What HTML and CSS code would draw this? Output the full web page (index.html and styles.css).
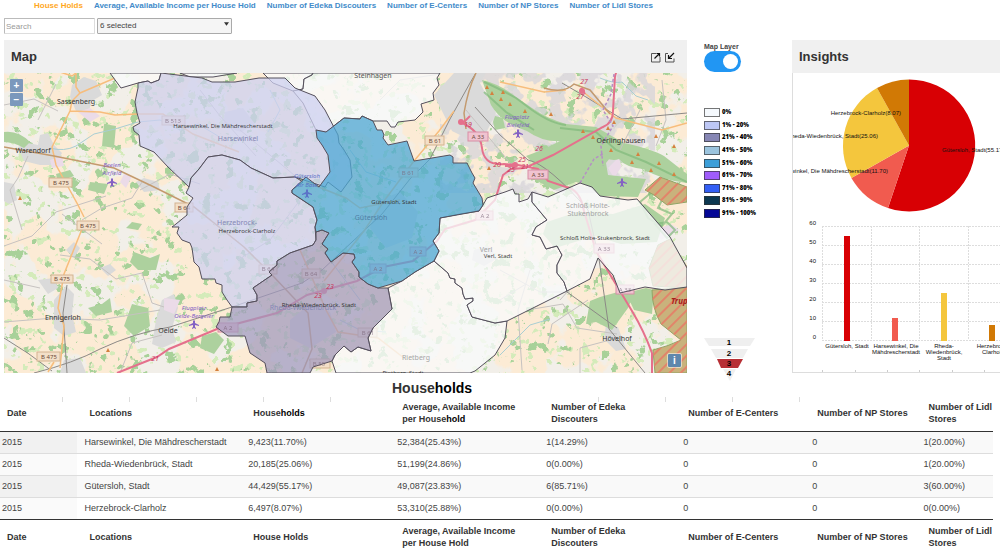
FILE: index.html
```html
<!DOCTYPE html>
<html lang="en">
<head>
<meta charset="utf-8">
<title>Households dashboard</title>
<link rel="stylesheet" href="styles.css">
</head>
<body>
<nav class="tabs">
  <a class="tab tab-active" href="#households">House Holds</a>
  <a class="tab" href="#income">Average, Available Income per House Hold</a>
  <a class="tab" href="#edeka">Number of Edeka Discouters</a>
  <a class="tab" href="#ecenters">Number of E-Centers</a>
  <a class="tab" href="#np">Number of NP Stores</a>
  <a class="tab" href="#lidl">Number of Lidl Stores</a>
</nav>

<form class="filters">
  <input class="search" type="text" placeholder="Search" aria-label="Search">
  <div class="picker">
    <select class="select" aria-label="Locations"><option>6 selected</option></select>
    <svg class="caret" viewBox="0 0 6 4" aria-hidden="true"><path d="M0 0h6L3 4z"/></svg>
  </div>
</form>

<main class="dashboard">
  <section class="panel">
    <header class="panel-head">
      <h2 class="panel-title">Map</h2>
      <div class="panel-tools">
        <button class="tool" type="button" aria-label="Expand">
          <svg viewBox="0 0 11 11"><path class="tool-box" d="M6 1.500H1.500V10H10V5"/><path class="tool-arrow" d="M4.500 6.500L9 2M6.500 1.500h3V4.500"/></svg>
        </button>
        <button class="tool" type="button" aria-label="Collapse">
          <svg viewBox="0 0 11 11"><path class="tool-box" d="M4 1.500H1.500V10H10V6.500"/><path class="tool-arrow" d="M10 1L5 6M4.500 3v3.500H8"/></svg>
        </button>
      </div>
    </header>
    <div class="map">
      <svg class="map-canvas" viewBox="4 73 683 300" role="img" aria-label="Map of the Gütersloh district">
        <defs>
          <filter id="fields" x="0" y="0" width="100%" height="100%" color-interpolation-filters="sRGB">
            <feTurbulence type="fractalNoise" baseFrequency="0.022" numOctaves="4" seed="4"/>
            <feColorMatrix values="0 0 0 0 .988  0 0 0 0 .922  0 0 0 0 .835  22 0 0 0 -9.500"/>
          </filter>
          <filter id="meadow" x="0" y="0" width="100%" height="100%" color-interpolation-filters="sRGB">
            <feTurbulence type="fractalNoise" baseFrequency="0.110" numOctaves="3" seed="11"/>
            <feColorMatrix values="0 0 0 0 .83  0 0 0 0 .92  0 0 0 0 .73  20 0 0 0 -12.800"/>
          </filter>
          <filter id="woods" x="0" y="0" width="100%" height="100%" color-interpolation-filters="sRGB">
            <feTurbulence type="fractalNoise" baseFrequency="0.085" numOctaves="4" seed="29"/>
            <feColorMatrix values="0 0 0 0 .66  0 0 0 0 .82  0 0 0 0 .60  22 0 0 0 -14"/>
          </filter>
          <filter id="suburb" x="0" y="0" width="100%" height="100%" color-interpolation-filters="sRGB">
            <feTurbulence type="fractalNoise" baseFrequency="0.060" numOctaves="3" seed="7"/>
            <feColorMatrix values="0 0 0 0 .85  0 0 0 0 .84  0 0 0 0 .86  16 0 0 0 -8"/>
          </filter>
          <pattern id="hatch" width="8" height="8" patternUnits="userSpaceOnUse" patternTransform="rotate(45)">
            <path d="M1 0v8" stroke="#e2846a" stroke-width="2"/>
          </pattern>
          <g id="plane"><path d="M0-4l1 1v2l4 2v1L1 1v2l1 1v1L0 4l-2 1V4l1-1V1l-4 1V1l4-2v-2z"/></g>
        </defs>

        <rect x="4" y="73" width="683" height="300" fill="#f2efe9"/>
        <rect x="4" y="73" width="683" height="300" filter="url(#fields)"/>
        <rect x="4" y="73" width="683" height="300" filter="url(#meadow)"/>
        <rect x="4" y="73" width="683" height="300" filter="url(#woods)"/>
        <rect x="440" y="73" width="215" height="120" filter="url(#suburb)" opacity=".8"/>

        <g class="town">
          <path d="M72 85l12-8 12 4 6 14-10 6-4 12-12-2-6-14zM18 147l10-4 10 2 2-10 8-2 6 12 8 8-6 12-16 0-16-4zM4 182l10 2 3 16-8 4-5-3zM54 300l12-14 8 8-2 20 4 18-12 4-10-8zM162 300l12-6 4 14-6 20 4 14-14 6-10-4 4-24zM64 360l16-2 6 15H60zM66 250l8-8 6 6-6 10zM136 182l8-4 14 4 2 8-16 2zM100 268l10-4 6 6-8 6zM38 280l16-2 4 10-10 6z"/>
          <path d="M380 200l20-8 18 20-6 26-26 10-16-20zM290 320l20-16 20 8 6 20-26 16-20-10zM225 112l18-4 12 16-14 8-18-6zM474 250l14-4 10 12-14 8-12-6zM606 325l12 2 8 22-10 2-12-12z"/>
          <path d="M434 95l20-22h32l-6 10 16 30-16 32-28-14z"/>
        </g>
        <g class="industry">
          <path d="M78 112l12-4 10 8-10 6zM50 160l12-4 2 10-12 2zM124 174l8 2-6 12-6-6zM164 298l16 2-6 14-10-4zM600 310l12-4 4 12-10 10zM608 168l10-10 4 8-8 12zM655 230l16-6 8 6-18 10z"/>
        </g>

        <g class="wood">
          <path d="M4 132q14-2 26 10l-6 6q-10-6-20-6zM104 124l12 2-2 22-12-2zM132 222l10 2-4 6-12-2zM90 182l18 2-4 10-16-4zM88 308l14-4 8-6 2 14-16 4zM134 252l16 6 10-4-4 16-18 0-8-8zM132 304l16 4 2 18-16 10-10-10zM202 336l14-4 8 8-10 14-14-6zM56 174l14-4 4 6-16 6z"/>
          <path d="M482 80q18 4 34 17l16 11q14 10 34 16l30 3q14 8 28 16 28 6 40 13l23 18v9q-22-2-44-14-18-2-24-10-10 4-22-8-14-10-32-10-22 2-38-10-26-8-36-26z"/>
          <path d="M542 150l30-15 30 14 12 4-8 10 2 12 38 4-8 18-38-1-12-10-12-4-22 8-26-14 6-12-8-8zM495 116l8 2 2 10-10 2-2-8zM590 301l10-4 18-5 16 2-6 14-16 22-16-8-10 2zM626 293l20-5 8 2-2 24-18-4zM547 222l30-10 36 2 32-10 20 14-8 24-36 2-26-8-40 12-12-14z"/>
        </g>
        <g class="wood-edge">
          <path d="M484 82q14 6 32 16l16 12q20 14 34 15M560 128l36 4 20 18 30 12 41 20M484 92l22 20 28 18M640 202l12-10 10 8-4 8 14 6-10 12-14-8zM655 224l12-2 8 8-8 8z"/>
        </g>
        <g class="reserve">
          <path d="M645 190l15-13 27 10v15l-20 3-13-10z"/>
          <path d="M652 290l35-3v86h-32l-2-23q16-4 28-10l-20-16q-9-16-9-34zM658 245l12-6 17 28v21l-34-2-4-18z"/>
          <path class="hatched" d="M645 190l15-13 27 10v15l-20 3-13-10z"/>
          <path class="hatched" d="M652 290l35-3v86h-32l-2-23q16-4 28-10l-20-16q-9-16-9-34zM658 245l12-6 17 28v21l-34-2-4-18z"/>
        </g>

        <g class="stream">
          <path d="M50 148q14 4 26-2l18-12q20-4 44-12l22-2 20 10 18-6 20 12M600 78q14 6 22 4l14 14 12 4M350 150l16 22 30 10M340 320l20 10 26 2M500 355l30-30 20-6M270 90l10 20-12 22M330 260l30 40"/>
        </g>
        <g class="lane">
          <path d="M4 105l30-6 24 12M38 120l18-36M4 246l28-10 24-24 50-16M28 156l-10 22-8 12 12 40M60 255l30 4 26 20 26-6 10 30 12 4M4 280l36 8M4 322l50-4 46 2 60-10M62 214l40 30M82 220l20-12 30-10 10-16M140 190l30-16 30 10M120 373l12-30 30-8M200 90l20 26 36 40M240 130l60 50M380 100l20-20 40-6M300 200l-30 40-32 20M500 270l40 22 30 0M530 270l-12 40 4 60M527 310l36-6 14 24 40 6M560 300l18-20M580 348v25M580 348l30-8M588 300l-36 24-4 20M640 110l-20 40M662 80l4 40-10 26M500 300l26-16M466 110l50 60"/>
        </g>
        <g class="rail">
          <path d="M4 338q24 14 48 33M34 373q40-10 66-24 34-16 70-22l62-20 70-24 20-13 60-56 28-35 20-20 20-40 20-36q8-14 18-30M67 373l-4-60 4-28M475 107l25 28 28 25q20 4 60 50l11 49 10 70 36 44M567 292l50 36M562 83l24 14 36 22 65-6"/>
        </g>
        <g class="road">
          <path d="M60 72l12 4 4-3 0 14 4 6-8 8 -2 10 -18 36 4 18 22 40 6 12M70 111l30 1 15 3 22-1 26 0 30 20 46 18M80 93l35-15M84 224l-20 50-6 34 6 18-4 42M48 372l6-10M306 182l40 16 14 10 40-8M414 161l25-30 15-20M414 161l-30 40-20 30-40 50M300 250l26 60 12 22 40 6 26 20M500 82l44 10 22-2M582 91l34 27 46 12 25-7"/>
        </g>
        <g class="trunk"><path d="M4 147l50 9 60 12 40 19 40 20 50 40 30 30 34 36 4 36-10 24M476 73q-8 16-12 40l2 16M544 88q20 6 30-4l16 6 20 24"/></g>
        <g class="motorway">
          <path d="M117 373l40-16 12-8 48-20 60-16 30-18 50-14 26-14 30-6 24-20 8-12 30-9 20-20 8-25 8-6 14-1 28-13 50-28q10-4 10-16l2-35 6-18M460 122q20 8 22 26t22 16l14 1 20 4 10 12 18 6q14 2 18 24l12 40 36 60q12 20 20 42v22M517 166l-12 0M581 88l4 6M462 124l8-8"/>
          <circle cx="461" cy="122" r="3"/><circle cx="515" cy="165" r="3"/><circle cx="582" cy="91" r="3"/><circle cx="324" cy="291" r="3"/>
        </g>
        <path class="border-line" d="M614 74l-3 20-8 16 10 16-12 20 2 20M580 183l14-24 10-6"/>

        <g class="shield">
          <rect x="49" y="178" width="23" height="9"/><rect x="77" y="221" width="22" height="9"/><rect x="51" y="275" width="22" height="8"/><rect x="37" y="352" width="23" height="9"/>
          <rect x="175" y="203" width="18" height="9"/><rect x="162" y="116" width="23" height="9"/><rect x="425" y="136" width="19" height="9"/><rect x="399" y="168" width="19" height="9"/>
          <rect x="302" y="269" width="18" height="9"/><rect x="259" y="265" width="18" height="9"/><rect x="358" y="328" width="19" height="9"/><rect x="310" y="359" width="20" height="9"/>
        </g>
        <g class="shield shield-a">
          <rect x="468" y="132" width="20" height="9"/><rect x="528" y="170" width="20" height="9"/><rect x="218" y="323" width="20" height="9"/><rect x="476" y="211" width="17" height="9"/>
          <rect x="410" y="247" width="16" height="9"/><rect x="370" y="264" width="16" height="9"/><rect x="594" y="244" width="20" height="9"/><rect x="616" y="285" width="18" height="9"/>
        </g>
        <g class="shield-text">
          <text x="61" y="185">B 475</text><text x="88" y="228">B 475</text><text x="62" y="281">B 475</text><text x="49" y="359">B 475</text>
          <text x="184" y="210">B 64</text><text x="435" y="143">B 61</text><text x="478" y="139">A 33</text><text x="538" y="177">A 33</text>
        </g>

        <g class="region region-none">
          <path d="M110 73l11 15 17-5 10-2 3 2 8-3 2-7zM180 73l10 4h23l24-4zM263 73l10 10 20 8 10-2 1-10 8-4 1-2z"/>
          <path d="M293 91l10-2 1-10 8-4 1-2h127l-3 5 2 7-6 8 1 7-13 4 2 8-8 8-17 2-3 5h-4l-4-6h-14l-11-5-2 3-16-1-18 14-10-2-13-27z"/>
          <path d="M434 261l14 12 2 5 5 1v4l7 5 1 6 2 5 8-1v3l-6 4 5 12 23 6 12-2-2 17-10 17-20 16-5 2H336l-4-12 3-6 9-9 7 6 7-5 13 4-3-13 5-10 19-19-4-21 14-7 13-9z"/>
          <path d="M483 205l4-7 18-6 8-3 2 5 4 0 0 8 9-3 4-7v10l15 18-11 7-4 8 8 2 6 12 11-3 5 9-5 10v8l7 9 3 9-60 30-12 2-23-6-5-12 6-4v-3l-8 1-2-5-1-6-7-5v-4l-5-1-2-5-14-12 5-10-6-10 6-8 1-15 20-4 19-3z"/>
          <path d="M532 192l16 5 32-14 12 4 8 9 28 4 9-1 33 38 17 31v19l-22 3-20-3-25 6-7-18-15-17-8 21-23 12-3-9-7-9v-8l5-10-5-9-11 3-6-12-8-2 4-8 11-7-15-18z"/>
        </g>
        <g class="region region-low">
          <path d="M161 73l-2 7-8 3-3-2-10 2v5l-3 14 2 11 3 10-7 4 1 4 5 4 1 11 14 6 14 15 21 20 1-4 1-5 8-9 9-12 14-2 18 5 11 8 22 10 22-1 30 10 3-5 13 10 11-15-2-17-6-10-5-7-1-8-13-25-10-14-20-8-10-10h-26l-24 4h-23l-10-4z"/>
          <path d="M189 187l1-4 1-5 8-9 9-12 14-2 18 5 11 8 22 10 22-1 8 5-11 8v3l21 14 4 13-2 7 1 13-3 5-23 8-13 8v4l-8 7 3 3-19 13 4 7v6l-10 2v4h-15l-5-7-5-8v-7l-6-2-1-4h-13l-3-12-5-5-2-14-2-5-8-3-5-7 2-6h-7l4-3 11-9v-8l6-9-7-5z"/>
        </g>
        <path class="region region-mid" d="M232 307l-2 10h-10l-1 5-3 5 12 9h17l5 17 15 10 2 10h43l3-6 19-6 3-6 9-9 7 6 7-5 13 4-3-13 5-10 19-19-4-21h-10l-10-4-9-7v-5l-7-10 3-4-1-4-11-1-12 9-6-9 3-4-6-5 7-11-7-3-6 2v8l-3 5-23 8-13 8v4l-8 7 3 3-19 13 4 7v6l-10 2v4z"/>
        <path class="region region-high" d="M316 130l10 2 18-14 16 1 2-3 11 5 4 9h5l2 5-1 3 5 7 19-4 7 20 36-6 3 2v6l14 0 5 10 3 5-2 5 9 15 1 7-4 6-39 7-1 15-6 8 6 10-5 10-19 11-13 9-24 7-10-4-9-7v-5l-7-10 3-4-1-4-11-1-12 9-6-9 3-4-6-5 7-11-7-3-6 2-1-5 2-7-4-13-21-14v-3l14-13 13 10 11-15-2-17-6-10-5-7z"/>

        <g class="shield-text shield-text-soft">
          <text x="173" y="123">B 513</text><text x="408" y="175">B 61</text><text x="311" y="276">B 64</text><text x="268" y="271">B 64</text><text x="368" y="335">B 61</text><text x="319" y="366">B 55</text>
          <text x="228" y="330">A 2</text><text x="485" y="218">A 2</text><text x="418" y="254">A 2</text><text x="378" y="271">A 2</text><text x="604" y="251">A 33</text><text x="625" y="292">A 33</text>
        </g>
        <g class="place">
          <text x="76" y="104">Sassenberg</text><text x="33" y="153">Warendorf</text><text x="63" y="320">Ennigerloh</text><text x="168" y="333">Oelde</text>
          <text x="621" y="143">Oerlinghausen</text><text x="617" y="341">Hövelhof</text><text x="373" y="78" class="place-dim">Steinhagen</text>
        </g>
        <g class="place place-soft">
          <text x="238" y="141">Harsewinkel</text><text x="237" y="225">Herzebrock-</text><text x="303" y="310">Rheda-Wiedenbrück</text>
          <text x="371" y="220" class="place-blue">Gütersloh</text>
        </g>
        <g class="place place-faint">
          <text x="486" y="252">Verl</text><text x="588" y="208">Schloß Holte-</text><text x="588" y="216">Stukenbrock</text><text x="416" y="360">Rietberg</text>
        </g>
        <g class="area">
          <text x="223" y="128">Harsewinkel, Die Mähdrescherstadt</text><text x="394" y="204">Gütersloh, Stadt</text><text x="247" y="233">Herzebrock-Clarholz</text>
          <text x="319" y="307">Rheda-Wiedenbrück, Stadt</text><text x="498" y="258">Verl, Stadt</text><text x="605" y="240">Schloß Holte-Stukenbrock, Stadt</text><text x="403" y="375">Rietberg, Stadt</text>
        </g>
        <g class="airport">
          <text x="112" y="167">Beelen</text><text x="112" y="175">Airfield</text><use href="#plane" x="112" y="182"/>
          <text x="194" y="310">Flugplatz</text><text x="194" y="318">Oelde-Bergeler</text><use href="#plane" x="194" y="324"/>
          <text x="517" y="119">Flugplatz</text><text x="518" y="127">Bielefeld</text><use href="#plane" x="518" y="133"/><use href="#plane" x="622" y="182"/>
        </g>
        <g class="airport airport-blue">
          <text x="307" y="178">Gütersloh</text><text x="307" y="187">Air Base</text><use href="#plane" x="307" y="193"/>
        </g>
        <g class="junction">
          <text x="584" y="84">27</text><text x="580" y="99">27</text><text x="468" y="127">19</text><text x="539" y="151">26</text><text x="522" y="162">25</text><text x="497" y="167">20</text><text x="525" y="169">21</text><text x="511" y="172">25</text><text x="155" y="361">21</text><text x="330" y="289">23</text><text x="318" y="298">23</text>
        </g>
        <text class="park" x="671" y="304">Truppenübungsplatz</text>
        <path class="peak" d="M485 89l2-4 2 4zM490 95l2-4 2 4zM501 94l2-4 2 4zM499 101l2-4 2 4zM508 106l2-4 2 4zM523 113l2-4 2 4zM549 116l2-4 2 4zM581 133l2-4 2 4zM591 139l2-4 2 4zM609 152l2-4 2 4zM606 130l2-4 2 4zM612 124l2-4 2 4zM654 138l2-4 2 4zM672 148l2-4 2 4zM636 156l2-4 2 4zM630 164l2-4 2 4zM657 165l2-4 2 4zM649 172l2-4 2 4zM672 176l2-4 2 4zM487 170l2-4 2 4zM18 200l2-4 2 4zM106 352l2-4 2 4zM215 371l2-4 2 4z"/>
      </svg>
      <div class="zoom">
        <button class="map-button" type="button" aria-label="Zoom in">+</button>
        <button class="map-button" type="button" aria-label="Zoom out">−</button>
      </div>
      <button class="map-button map-info" type="button" aria-label="Attributions">i</button>
    </div>
  </section>

  <aside class="side">
    <label class="layer-label" for="layer">Map Layer</label>
    <input class="toggle" id="layer" type="checkbox" role="switch" checked>
    <ul class="legend">
      <li class="legend-item"><span class="swatch swatch-0"></span>0%</li>
      <li class="legend-item"><span class="swatch swatch-1"></span>1% - 20%</li>
      <li class="legend-item"><span class="swatch swatch-2"></span>21% - 40%</li>
      <li class="legend-item"><span class="swatch swatch-3"></span>41% - 50%</li>
      <li class="legend-item"><span class="swatch swatch-4"></span>51% - 60%</li>
      <li class="legend-item"><span class="swatch swatch-5"></span>61% - 70%</li>
      <li class="legend-item"><span class="swatch swatch-6"></span>71% - 80%</li>
      <li class="legend-item"><span class="swatch swatch-7"></span>81% - 90%</li>
      <li class="legend-item"><span class="swatch swatch-8"></span>91% - 100%</li>
    </ul>
    <svg class="funnel" viewBox="0 0 52 44" role="img" aria-label="Level 3 of 4">
      <path class="funnel-step" d="M0 0h51l-5 8H5zM7 11h37l-5 9H12zM19 31h13l-6 12z"/>
      <path class="funnel-current" d="M13 21h26l-5 9H17z"/>
      <text x="25" y="7">1</text><text x="25" y="18">2</text><text x="25" y="28">3</text><text x="25" y="38">4</text>
    </svg>
  </aside>

  <section class="panel insights">
    <header class="panel-head"><h2 class="panel-title">Insights</h2></header>
    <div class="charts">
      <svg class="chart" viewBox="793 73 260 299" role="img" aria-label="Share of households by location">
        <path fill="#d80004" d="M909 145.500V79.500A66 66 0 1 1 888 208z"/>
        <path fill="#f15b4f" d="M909 145.500L888 208A66 66 0 0 1 851.400 178z"/>
        <path fill="#f4c63d" d="M909 145.500L851.400 178A66 66 0 0 1 877 88z"/>
        <path fill="#d17905" d="M909 145.500L877 88A66 66 0 0 1 909 79.500z"/>
        <g class="chart-text">
          <text x="942" y="152">Gütersloh, Stadt(55.17)</text>
          <text x="888" y="173" class="at-end">Harsewinkel, Die Mähdrescherstadt(11.70)</text>
          <text x="878" y="138" class="at-end">Rheda-Wiedenbrück, Stadt(25.06)</text>
          <text x="901" y="115" class="at-end">Herzebrock-Clarholz(8.07)</text>
        </g>
        <path class="grid" d="M822 226.500h231M822 245.500h231M822 264.500h231M822 283.500h231M822 302.500h231M822 321.500h231M822 340.500h231M822.500 226v114M871.500 226v114M919.500 226v114M968.500 226v114M1017.500 226v114"/>
        <path fill="#d80004" d="M844 236h6v105h-6z"/><path fill="#f15b4f" d="M892 318h6v23h-6z"/><path fill="#f4c63d" d="M941 293h6v48h-6z"/><path fill="#d17905" d="M989 325h6v16h-6z"/>
        <g class="chart-text">
          <text x="816" y="225" class="at-end">60</text><text x="816" y="244" class="at-end">50</text><text x="816" y="263" class="at-end">40</text><text x="816" y="282" class="at-end">30</text><text x="816" y="301" class="at-end">20</text><text x="816" y="320" class="at-end">10</text><text x="816" y="339" class="at-end">0</text>
          <text x="847" y="348" class="at-mid">Gütersloh, Stadt</text>
          <text x="896" y="348" class="at-mid">Harsewinkel, Die</text><text x="896" y="354" class="at-mid">Mähdrescherstadt</text>
          <text x="944" y="348" class="at-mid">Rheda-</text><text x="944" y="354" class="at-mid">Wiedenbrück,</text><text x="944" y="360" class="at-mid">Stadt</text>
          <text x="993" y="348" class="at-mid">Herzebrock-</text><text x="993" y="354" class="at-mid">Clarholz</text>
        </g>
        <path class="ticks" d="M822.500 370v2M855.500 370v2M887.500 370v2M919.500 370v2M952.500 370v2M984.500 370v2"/>
      </svg>
    </div>
  </section>
</main>

<section class="report">
  <h2 class="report-title">House<span class="ink">holds</span></h2>
  <div class="table-wrap">
    <div class="ruler" aria-hidden="true"><i></i><i></i><i></i><i></i><i></i><i class="blank"></i><i class="blank"></i><i class="blank"></i><i></i><i></i><i></i><i></i></div>
    <table class="table">
      <colgroup><col class="c-date"><col class="c-loc"><col class="c-num"><col class="c-num"><col class="c-edeka"><col class="c-ec"><col class="c-np"><col class="c-lidl"></colgroup>
      <thead>
        <tr><th>Date</th><th>Locations</th><th>House<span class="ink">holds</span></th><th>Average, Available Income<br>per House<span class="ink">hold</span></th><th>Number of Edeka<br>Discouters</th><th>Number of E-Centers</th><th>Number of NP Stores</th><th>Number of Lidl<br>Stores</th></tr>
      </thead>
      <tbody>
        <tr><td>2015</td><td>Harsewinkel, Die Mähdrescherstadt</td><td>9,423(11.70%)</td><td>52,384(25.43%)</td><td>1(14.29%)</td><td>0</td><td>0</td><td>1(20.00%)</td></tr>
        <tr><td>2015</td><td>Rheda-Wiedenbrück, Stadt</td><td>20,185(25.06%)</td><td>51,199(24.86%)</td><td>0(0.00%)</td><td>0</td><td>0</td><td>1(20.00%)</td></tr>
        <tr><td>2015</td><td>Gütersloh, Stadt</td><td>44,429(55.17%)</td><td>49,087(23.83%)</td><td>6(85.71%)</td><td>0</td><td>0</td><td>3(60.00%)</td></tr>
        <tr><td>2015</td><td>Herzebrock-Clarholz</td><td>6,497(8.07%)</td><td>53,310(25.88%)</td><td>0(0.00%)</td><td>0</td><td>0</td><td>0(0.00%)</td></tr>
      </tbody>
      <tfoot>
        <tr><th>Date</th><th>Locations</th><th>House Holds</th><th>Average, Available Income<br>per House Hold</th><th>Number of Edeka<br>Discouters</th><th>Number of E-Centers</th><th>Number of NP Stores</th><th>Number of Lidl<br>Stores</th></tr>
      </tfoot>
    </table>
  </div>
</section>
</body>
</html>
```
FILE: styles.css
```css
* { box-sizing: border-box; }

body {
  margin: 0;
  background: #fff;
  color: #333;
  font-family: "Liberation Sans", Arial, sans-serif;
  font-size: 9px;
}

button { padding: 0; border: 0; font: inherit; cursor: pointer; }

/* Tabs and filters */
.tabs {
  display: flex;
  gap: 11px;
  height: 18px;
  padding: 0 34px;
  font-size: 8px;
  font-weight: bold;
  line-height: 12px;
  white-space: nowrap;
}
.tab { color: #428bca; text-decoration: none; }
.tab-active { color: #ffa81f; }

.filters { display: flex; gap: 2px; height: 22px; padding-left: 4px; }
.search,
.select {
  height: 16px;
  margin: 0;
  border: 1px solid #ccc;
  border-radius: 1px;
  color: #444;
  font-family: inherit;
  font-size: 8px;
  line-height: 12px;
}
.search { width: 91px; padding: 0 1px; border-color: #bbb #ddd #ddd #bbb; }
.search::placeholder { color: #999; }
.picker { position: relative; width: 135px; height: 16px; }
.select { width: 100%; padding: 0 2px; appearance: none; background: #f5f5f5; border-color: #aaa; }
.caret { position: absolute; top: 4px; right: 3px; width: 5px; height: 4px; fill: #333; pointer-events: none; }

/* Dashboard panels */
.dashboard {
  display: grid;
  grid-template-columns: minmax(0, 683fr) 105px minmax(0, 208fr);
  padding-left: 4px;
}
.panel { display: flex; flex-direction: column; min-width: 0; }
.panel-head {
  display: flex;
  align-items: center;
  justify-content: space-between;
  height: 33px;
  padding: 0 12px 0 7px;
  background: #f0f0f0;
}
.panel-title { margin: 0; font-size: 13px; line-height: 16px; }
.panel-tools { display: flex; gap: 3px; padding-top: 2px; }
.tool { width: 11px; height: 11px; background: none; }
.tool svg { display: block; width: 11px; height: 11px; fill: none; }
.tool-box { stroke: #555; stroke-width: 1; }
.tool-arrow { stroke: #111; stroke-width: 1.2; }

.map { position: relative; }
.map-canvas { display: block; width: 100%; height: auto; }
.zoom { position: absolute; top: 6px; left: 6px; display: grid; gap: 1px; }
.map-button {
  width: 13px;
  height: 13px;
  border-radius: 1px;
  background: #7b98bc;
  color: #fff;
  font-size: 10px;
  font-weight: bold;
  line-height: 13px;
}
.map-info { position: absolute; right: 6px; bottom: 6px; outline: 1px solid #ffffff80; background: #5f87ac; }

/* Map drawing */
.town { fill: #dadada; }
.industry { fill: #ebdbe8; }
.wood { fill: #add19e; }
.wood-edge { fill: none; stroke: #7fb97a; stroke-width: 2; opacity: .7; }
.reserve { fill: #c9b27c; }
.reserve path { stroke: #8fa566; }
.reserve .hatched { fill: url(#hatch); stroke: none; }
.stream { fill: none; stroke: #a9ced3; }
.lane { fill: none; stroke: #c6c2c0; }
.rail { fill: none; stroke: #8c8986; }
.road { fill: none; stroke: #f7bd7c; stroke-width: 1.5; }
.trunk { fill: none; stroke: #c39a6e; stroke-width: 1.5; }
.motorway { fill: none; stroke: #e5708c; stroke-width: 2; }
.motorway circle { fill: #e5708c; stroke: none; }
.border-line { fill: none; stroke: #b58fc4; stroke-width: 1.5; stroke-dasharray: 3 2; }
.shield { fill: #f3dfc8; stroke: #d3b491; }
.shield-a { fill: #f0c3d0; stroke: #d78ea5; }
.shield-text { fill: #6e4b3a; font: 6px "Noto Sans", sans-serif; text-anchor: middle; }
.shield-text-soft { fill: #7a6478; opacity: .7; }
.place { fill: #333; font: 7px "Noto Sans", sans-serif; text-anchor: middle; }
.place-dim { fill: #555; }
.place-soft { fill: #8587b4; }
.place-blue { fill: #4f7fa6; }
.place-faint { fill: #a5a5a5; }
.area { fill: #333; font: 6px "Open Sans", sans-serif; text-anchor: middle; }
.airport { fill: #8461c4; font: italic 6px "Noto Sans", sans-serif; text-anchor: middle; }
.airport-blue { fill: #5b72c8; }
.junction { fill: #c8385e; font: italic 7px "Noto Sans", sans-serif; text-anchor: middle; }
.park { fill: #a8201a; font: italic bold 8px "Noto Sans", sans-serif; }
.peak { fill: #d4813f; }
.region { stroke: #55505c; stroke-linejoin: round; }
.region-none { fill: #f9fafb; fill-opacity: .78; }
.region-low { fill: #cdd0f0; fill-opacity: .74; }
.region-mid { fill: #9f98be; fill-opacity: .72; }
.region-high { fill: #4ea8d6; fill-opacity: .75; }

/* Layer switch and legend */
.side { display: flex; flex-direction: column; align-items: flex-start; padding: 2px 0 0 17px; }
.layer-label { color: #444; font-size: 7px; font-weight: bold; line-height: 9px; }
.toggle {
  width: 37px;
  height: 21px;
  margin: 0;
  padding: 3px;
  appearance: none;
  border-radius: 11px;
  background: #2196f3;
}
.toggle::before {
  display: block;
  width: 15px;
  height: 15px;
  border-radius: 50%;
  background: #fff;
  content: "";
}
.toggle:checked::before { margin-left: auto; }
.legend {
  display: flex;
  flex-direction: column;
  justify-content: space-between;
  height: 110px;
  margin: 36px 0 0;
  padding: 0;
  list-style: none;
}
.legend-item {
  display: flex;
  align-items: center;
  gap: 2px;
  height: 9px;
  color: #000;
  font: 800 6px/9px "Open Sans", sans-serif;
}
.swatch { width: 16px; height: 9px; border: 1px solid #333a; }
.swatch-0 { background: #f5f9fd; }
.swatch-1 { background: #bdc7f5; }
.swatch-2 { background: #8686b4; }
.swatch-3 { background: #9bc4de; }
.swatch-4 { background: #3c9fd9; }
.swatch-5 { background: #a05cfb; }
.swatch-6 { background: #335ff5; }
.swatch-7 { background: #0d3850; }
.swatch-8 { background: #050796; }
.funnel { width: 52px; height: 44px; margin-top: 120px; margin-bottom: -10px; }
.funnel text { fill: #000; font: bold 8px "Liberation Sans", sans-serif; text-anchor: middle; }
.funnel-step { fill: #efefef; }
.funnel-current { fill: #b72f35; }

/* Charts */
.insights { overflow: hidden; }
.charts { flex: 1; min-height: 300px; overflow: hidden; border: 1px solid #ddd; border-width: 0 0 1px 1px; }
.chart { display: block; width: 260px; height: 299px; }
.chart-text { fill: #111; font: 6px "Liberation Sans", sans-serif; }
.at-end { text-anchor: end; }
.at-mid { text-anchor: middle; }
.grid { fill: none; stroke: #ddd; stroke-dasharray: 2 1; }
.ticks { stroke: #ccc; }

/* Report table */
.report-title { margin: 0; padding: 7px 0 0 392px; font-size: 14px; line-height: 16px; }
.ink { color: #000; }
.table-wrap { position: relative; }
.ruler { position: absolute; top: 1px; left: -4px; display: flex; }
.ruler i { width: 67px; height: 5px; border-right: 1px solid #ddd; }
.ruler .blank { border-color: transparent; }
.table { width: calc(100% - 7px); border-collapse: collapse; table-layout: fixed; line-height: 12px; }
.c-date { width: 7.8%; }
.c-loc { width: 16.5%; }
.c-num { width: 15%; }
.c-edeka { width: 13.8%; }
.c-ec { width: 13%; }
.c-np { width: 11.2%; }
.c-lidl { width: 7.7%; }
.table th { height: 35px; padding: 0 0 0 12px; text-align: left; white-space: nowrap; }
.table td { height: 22px; padding: 0 0 0 7px; border-top: 1px solid #ddd; color: #444; white-space: nowrap; }
.table th:first-child { padding-left: 7px; }
.table td:first-child { padding-left: 2px; background: #fafafa; }
.table tbody tr:nth-child(odd) { background: #f9f9f9; }
.table tbody tr:nth-child(odd) td:first-child { background: #f1f1f1; }
.table thead { border-bottom: 1px solid #333; }
.table tbody tr:first-child td { border-top-color: #333; }
.table tfoot { border-top: 1px solid #333; }
```
